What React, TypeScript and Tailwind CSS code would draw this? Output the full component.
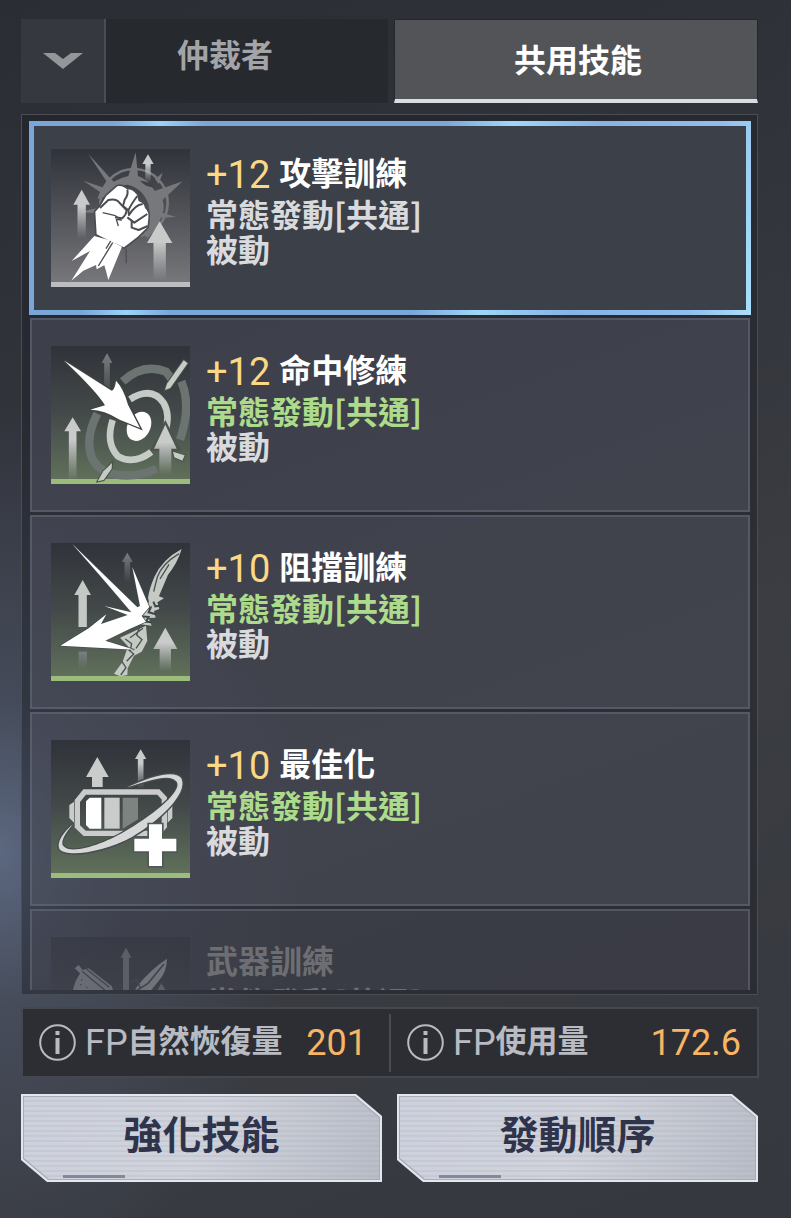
import { type ReactNode } from 'react'
import { clsx } from 'clsx'

type Tone = 'plain' | 'green' | 'locked'

interface Skill {
  name: string
  level?: string
  tone: Tone
  viewBox: string
  art: ReactNode
  selected?: boolean
}

interface ArrowProps {
  x: number
  y: number
  w: number
  h: number
  head: number
  stem: number
  fill?: string
}

// Upward arrow; x is the centre line, y the tip
function Arrow({ x, y, w, h, head, stem, fill = 'url(#arrow)' }: ArrowProps) {
  const s = stem / 2
  return (
    <path
      fill={fill}
      d={`M${x} ${y}L${x + w / 2} ${y + head}H${x + s}V${y + h}H${x - s}V${y + head}H${x - w / 2}Z`}
    />
  )
}

function AttackArt() {
  return (
    <>
      <g fill="#77787b">
        <circle cx="282" cy="188" r="101" fill="none" stroke="#77787b" strokeWidth="8" />
        <path d="M145 42L221 125Q245 112 265 108L287 37L294 108Q325 118 344 153L428 124L368 180Q374 200 368 219L408 231L362 233Q350 270 322 294L311 282Q335 240 326 195Q310 145 262 134Q225 134 194 170L172 176L180 156L130 122L187 142Q192 135 202 128Z" />
        <path d="M118 217L167 205V219Z" />
        <path d="M345 118L368 98L356 132Z" />
      </g>
      <path d="M299 122Q335 125 340 143L318 137Z" fill="#3f4147" />
      <Arrow x={324} y={43} w={34} h={84} head={29} stem={16} />
      <Arrow x={125} y={149} w={50} h={145} head={45} stem={25} />
      <Arrow x={359} y={244} w={76} h={176} head={65} stem={37} />
      <path
        d="M180 200L199 168L232 139Q246 134 262 149Q276 146 291 164L296 184Q312 188 315 204Q328 216 325 236L322 262L292 291L252 322L205 301L170 283L166 215Z"
        fill="#fff"
        stroke="#4b4d52"
        strokeWidth="10"
        strokeLinejoin="round"
        paintOrder="stroke"
      />
      <g fill="none" stroke="#4b4d52" strokeWidth="6" strokeLinejoin="round">
        <path d="M262 149Q266 163 254 179L249 198L265 211Q274 192 292 168" />
        <path d="M180 204L205 180Q230 175 239 189L260 211Q258 226 246 235L225 232" />
        <path d="M265 211L267 225Q285 195 308 192M262 232L283 248L322 222M275 241V263L296 270L323 258" />
        <path d="M188 218L226 227L244 240L229 238L235 258" strokeWidth="4" />
      </g>
      <path d="M163 288L206 300L246 320L205 420L198 393L193 376L170 388L168 375L130 392L94 422L150 333L95 363L125 330Z" fill="#fff" />
      <path d="M218 308L175 378M212 303L198 326M258 326L259 370" stroke="#4b4d52" strokeWidth="4" />
    </>
  )
}

function AccuracyArt() {
  return (
    <>
      <g fill="none">
        <path d="M248 130Q310 74 378 101L400 130M424 130Q455 205 420 305M172 227Q132 305 158 365Q182 405 228 410Q290 420 350 392" stroke="#6c7471" strokeWidth="25" />
        <path d="M270 184Q335 143 371 195Q392 232 375 283M218 246Q196 315 234 355Q280 382 334 342" stroke="#c6cbc6" strokeWidth="20" />
      </g>
      <ellipse cx="297" cy="265" rx="34" ry="46" fill="#fff" transform="rotate(28 297 265)" />
      <g fill="#c6cbc6" stroke="#465047" strokeWidth="6" paintOrder="stroke">
        <path d="M431 67L443 76L391 150L375 156L381 137Z" />
        <path d="M216 375L215 392L191 426L173 430L190 400Z" />
        <path d="M399 341L434 352L427 368L403 358Z" />
      </g>
      <Arrow x={201} y={46} w={33} h={140} head={29} stem={17} fill="url(#dim)" />
      <Arrow x={98} y={238} w={50} h={190} head={42} stem={23} />
      <path d="M376 246L424 338H330Z" fill="#4b554b" />
      <Arrow x={376} y={260} w={68} h={150} head={72} stem={36} />
      <path
        d="M73 68L215 158Q225 154 228 128Q250 150 264 200L300 270L239 245Q190 214 150 215L195 202Q170 160 73 68Z"
        fill="#fff"
        stroke="#3e4440"
        strokeWidth="8"
        paintOrder="stroke"
      />
    </>
  )
}

function BlockArt() {
  return (
    <>
      <Arrow x={262} y={53} w={33} h={90} head={28} stem={17} fill="url(#dim)" />
      <Arrow x={128} y={135} w={50} h={141} head={45} stem={25} fill="#c5c9c6" />
      <path d="M116 350H141V402H116Z" fill="url(#dim)" />
      <Arrow x={376} y={278} w={72} h={130} head={64} stem={34} />
      <path d="M425 42Q412 85 384 119L358 181L330 215L324 188Q328 161 343 126Q367 73 425 42Z" fill="#c5cac5" />
      <path d="M417 56Q365 88 352 126L341 170M387 88L360 132" fill="none" stroke="#4a5350" strokeWidth="4" />
      <path d="M240 308L318 272L322 318L305 350L282 362L263 400L262 420L241 424L222 416L248 380L264 334Z" fill="#c5cac5" />
      <path d="M256 312L275 326L270 350M298 278L290 300L306 314L288 340M266 345L281 357L260 379M246 380L258 398L242 420M309 280L270 308" fill="none" stroke="#4a5350" strokeWidth="4" />
      <path d="M318 210L348 180L372 190L352 202L358 222L342 228L347 248L326 249L335 272L302 268L294 236Z" fill="#c5cac5" />
      <path d="M312 222L332 218L326 232L348 238M304 244L326 246L318 260L334 262M340 200L346 214L360 212" fill="none" stroke="#3f4746" strokeWidth="6" />
      <path
        d="M99 29L292 217L300 213L277 97L328 216L318 228L305 243L318 260L270 281L196 317L283 344L61 332L146 280L199 238L183 267L263 240L193 213L274 232Q210 155 99 29Z"
        fill="#fff"
        stroke="#434a4b"
        strokeWidth="4"
        paintOrder="stroke"
      />
    </>
  )
}

function OptimizeArt() {
  return (
    <>
      <Arrow x={172} y={75} w={68} h={90} head={60} stem={32} fill="#c9cccb" />
      <Arrow x={302} y={52} w={34} h={118} head={29} stem={17} />
      <path d="M134 180H355L373 199V283L355 304H134L112 283V207Z" fill="none" stroke="#c9cccb" strokeWidth="16" />
      <path d="M102 209L88 219V258L102 272ZM397 220L383 234V272L397 258Z" fill="#c9cccb" />
      <path d="M149 197H184V290H149L138 279V208Z" fill="#fff" />
      <path d="M193 197H239V290H193Z" fill="#c9cccb" />
      <path d="M248 197H294V262L248 290Z" fill="#7d8381" />
      <path
        d="M262 166C330 133 405 112 424 139C447 187 350 272 276 315C190 361 81 378 58 351C49 331 70 300 100 276C72 307 61 331 70 342C94 371 197 335 265 292C349 241 428 176 410 149C390 122 322 147 262 166Z"
        fill="#d5d8d7"
        stroke="#454b4e"
        strokeWidth="8"
        paintOrder="stroke"
      />
      <path d="M327 277H366V320H409V358H366V402H327V358H283V320H327Z" fill="#fff" stroke="#505957" strokeWidth="10" paintOrder="stroke" />
    </>
  )
}

function WeaponArt() {
  return (
    <>
      <Arrow x={318} y={143} w={32} h={150} head={30} stem={18} fill="#8a8b8f" />
      <path d="M164 205L176 195L188 210L206 205L275 258L290 300H150L166 245L180 220Z" fill="#aaabae" />
      <path d="M186 214L260 275M200 208L268 262M183 240H187M180 254H184M198 262H202" stroke="#4a4b51" strokeWidth="4" />
      <path d="M441 176Q440 215 418 240L370 300H330L352 258Q390 210 441 176Z" fill="#c0c1c4" />
      <path d="M432 192L384 250L345 275M328 248L350 240L362 266" fill="none" stroke="#4a4b51" strokeWidth="5" />
      <path d="M424 250L440 275H410Z" fill="#8a8b8f" />
    </>
  )
}

const skills: Skill[] = [
  { name: '攻擊訓練', level: '+12', tone: 'plain', viewBox: '33 27 417 414', art: <AttackArt />, selected: true },
  { name: '命中修練', level: '+12', tone: 'green', viewBox: '33 24 417 414', art: <AccuracyArt /> },
  { name: '阻擋訓練', level: '+10', tone: 'green', viewBox: '33 24 417 414', art: <BlockArt /> },
  { name: '最佳化', level: '+10', tone: 'green', viewBox: '33 24 417 414', art: <OptimizeArt /> },
  { name: '武器訓練', tone: 'locked', viewBox: '93 111 417 414', art: <WeaponArt /> },
]

const stats = [
  { label: 'FP自然恢復量', value: '201' },
  { label: 'FP使用量', value: '172.6' },
]

function SkillRow({ skill }: { skill: Skill }) {
  const { name, level, tone, viewBox, art, selected } = skill

  return (
    <li className={clsx(!selected && 'px-px')}>
      <button
        type="button"
        aria-pressed={!!selected}
        className={clsx(
          'flex h-[194px] w-full items-start gap-4 text-left',
          selected
            ? 'border-[5px] bg-[#3c4048] px-[17px] pt-[21px] [border-image:linear-gradient(100deg,#7aa6d8_0%,#7aa6d8_11%,#9cd2fa_17%,#7aa6d8_23%,#7aa6d8_55%,#9fd6f8_64%,#86b4e6_76%,#8fbdec_92%,#a8defa_100%)_1]'
            : 'border-2 border-[#6a7080]/50 px-[19px] pt-6',
          !selected && (tone === 'locked' ? 'bg-[#5c5c6e]/30' : 'bg-[#666a7a]/35')
        )}
      >
        <span
          className={clsx(
            'mt-[2px] flex h-[138px] w-[139px] shrink-0 flex-col border-b-[5px] bg-linear-to-b from-[#30333a]',
            tone === 'plain' && 'border-[#bcbdc0] to-[#77777a]',
            tone === 'green' && 'border-[#9cbc7c] via-[#434949] to-[#60705a]',
            tone === 'locked' && 'border-[#777] to-[#555] opacity-40'
          )}
        >
          <svg viewBox={viewBox} className="h-[138px] w-[139px] shrink-0" aria-hidden="true">
            {art}
          </svg>
        </span>
        <span
          className={clsx(
            'flex flex-col text-[32px] leading-[35px] font-bold',
            tone === 'locked' ? 'text-[#6d6e73]' : 'text-[#d9dade]'
          )}
        >
          <span className="flex h-[49px] items-center gap-[9px]">
            {level && (
              <span className="pt-2 font-[Roboto,sans-serif] text-[38px] font-normal text-[#fbd886]">{level}</span>
            )}
            <span className={clsx(tone !== 'locked' && 'text-white')}>{name}</span>
          </span>
          <span className={clsx(tone === 'green' && 'text-[#addb8c]')}>常態發動[共通]</span>
          <span>被動</span>
        </span>
      </button>
    </li>
  )
}

function ActionButton({ children }: { children: ReactNode }) {
  return (
    <button
      type="button"
      className="relative flex h-[88px] flex-1 bg-[#e4e6ed] p-[2px] [clip-path:polygon(0_0,calc(100%-26px)_0,100%_22px,100%_100%,26px_100%,0_calc(100%-22px))]"
    >
      <span className="flex flex-1 bg-[#a9adb9] p-px [clip-path:polygon(0_0,calc(100%-25px)_0,100%_21px,100%_100%,25px_100%,0_calc(100%-21px))]">
        <span className="flex flex-1 items-center justify-center bg-[repeating-linear-gradient(180deg,#0000_0_3px,#9da1b02e_3px_5px),linear-gradient(115deg,#cdd1dd,#d0d3db_50%,#b9bdc7)] pb-3 text-[39px] leading-none font-bold text-[#2f344b] [clip-path:polygon(0_0,calc(100%-25px)_0,100%_21px,100%_100%,25px_100%,0_calc(100%-21px))]">
          {children}
        </span>
      </span>
      <span className="absolute bottom-1 left-[42px] h-[3px] w-[62px] bg-[#858899]" />
    </button>
  )
}

export default function App() {
  return (
    <main className="flex h-screen flex-col bg-[radial-gradient(ellipse_300px_440px_at_0_70%,#5c6880_0%,#4d566a99_35%,#0000_100%),linear-gradient(160deg,#2a2d34_0%,#32343c_30%,#3b3d42_60%,#35383f_100%)] pt-[19px] pr-8 pb-9 pl-[21px] font-['Noto_Sans_CJK_TC',sans-serif]">
      {/* Gradients shared by the skill icons */}
      <svg className="absolute size-0" aria-hidden="true">
        <defs>
          <linearGradient id="arrow" x1="0" y1="0" x2="0" y2="1">
            <stop offset="0.35" stopColor="#c9cbca" />
            <stop offset="1" stopColor="#c9cbca" stopOpacity="0" />
          </linearGradient>
          <linearGradient id="dim" x1="0" y1="0" x2="0" y2="1">
            <stop offset="0" stopColor="#7b7f81" />
            <stop offset="1" stopColor="#7b7f81" stopOpacity="0" />
          </linearGradient>
        </defs>
      </svg>

      {/* Tabs */}
      <nav className="grid h-[84px] shrink-0 grid-cols-[367fr_364fr] gap-[6px] pr-px">
        <div className="flex bg-[#26292e]">
          <button
            type="button"
            aria-label="展開"
            className="flex w-[85px] items-center justify-center border-r-2 border-[#4a4d54] bg-[#35383f]"
          >
            <svg viewBox="0 0 40 16" className="h-4 w-10" aria-hidden="true">
              <path d="M0 0H12L20 6L28 0H40L20 16Z" fill="#94969a" />
            </svg>
          </button>
          <button type="button" className="flex-1 pr-11 pb-4 text-[32px] leading-none font-bold text-[#a3a4a7]">
            仲裁者
          </button>
        </div>
        <button
          type="button"
          className="border border-b-[4px] border-[#24272c] border-b-[#dcdde2] bg-[#535458] pb-1 pl-1 text-[32px] leading-none font-bold text-white"
        >
          共用技能
        </button>
      </nav>

      {/* Skill list */}
      <section className="mt-[11px] mr-px flex min-h-0 flex-1 flex-col border border-[#4a4d54] bg-[#1c1f26]/45 pt-[6px] pr-[6px] pb-1 pl-[7px]">
        <ul className="flex min-h-0 flex-1 flex-col gap-[3px] overflow-hidden">
          {skills.map((skill) => (
            <SkillRow key={skill.name} skill={skill} />
          ))}
        </ul>
      </section>

      {/* FP stats */}
      <dl className="mt-3 grid h-[71px] shrink-0 grid-cols-[368fr_366fr] items-center border-2 border-[#44474d] bg-[#2c2e34]">
        {stats.map(({ label, value }) => (
          <div
            key={label}
            className="flex h-[58px] items-center border-[#4a4c52] px-4 first:border-r-2 first:pr-[22px]"
          >
            <dt className="flex items-center gap-[9px] text-[31px] font-bold whitespace-nowrap text-[#b9bbc2]">
              <button type="button" aria-label={label}>
                <svg viewBox="0 0 37 37" className="size-[37px]" fill="none" stroke="currentColor" aria-hidden="true">
                  <circle cx="18.5" cy="18.5" r="17.3" strokeWidth="2" />
                  <path d="M18.5 14V30M18.5 7V11" strokeWidth="4" />
                </svg>
              </button>
              <span className="flex items-center leading-[48px]">
                <span className="font-[Roboto,sans-serif] text-[36px] font-normal">FP</span>
                <span className="pb-2">{label.slice(2)}</span>
              </span>
            </dt>
            <dd className="ml-auto font-[Roboto,sans-serif] text-[36px] font-normal text-[#f9b563]">{value}</dd>
          </div>
        ))}
      </dl>

      {/* Actions */}
      <div className="mt-4 flex shrink-0 gap-[15px] pr-px">
        <ActionButton>強化技能</ActionButton>
        <ActionButton>發動順序</ActionButton>
      </div>
    </main>
  )
}
